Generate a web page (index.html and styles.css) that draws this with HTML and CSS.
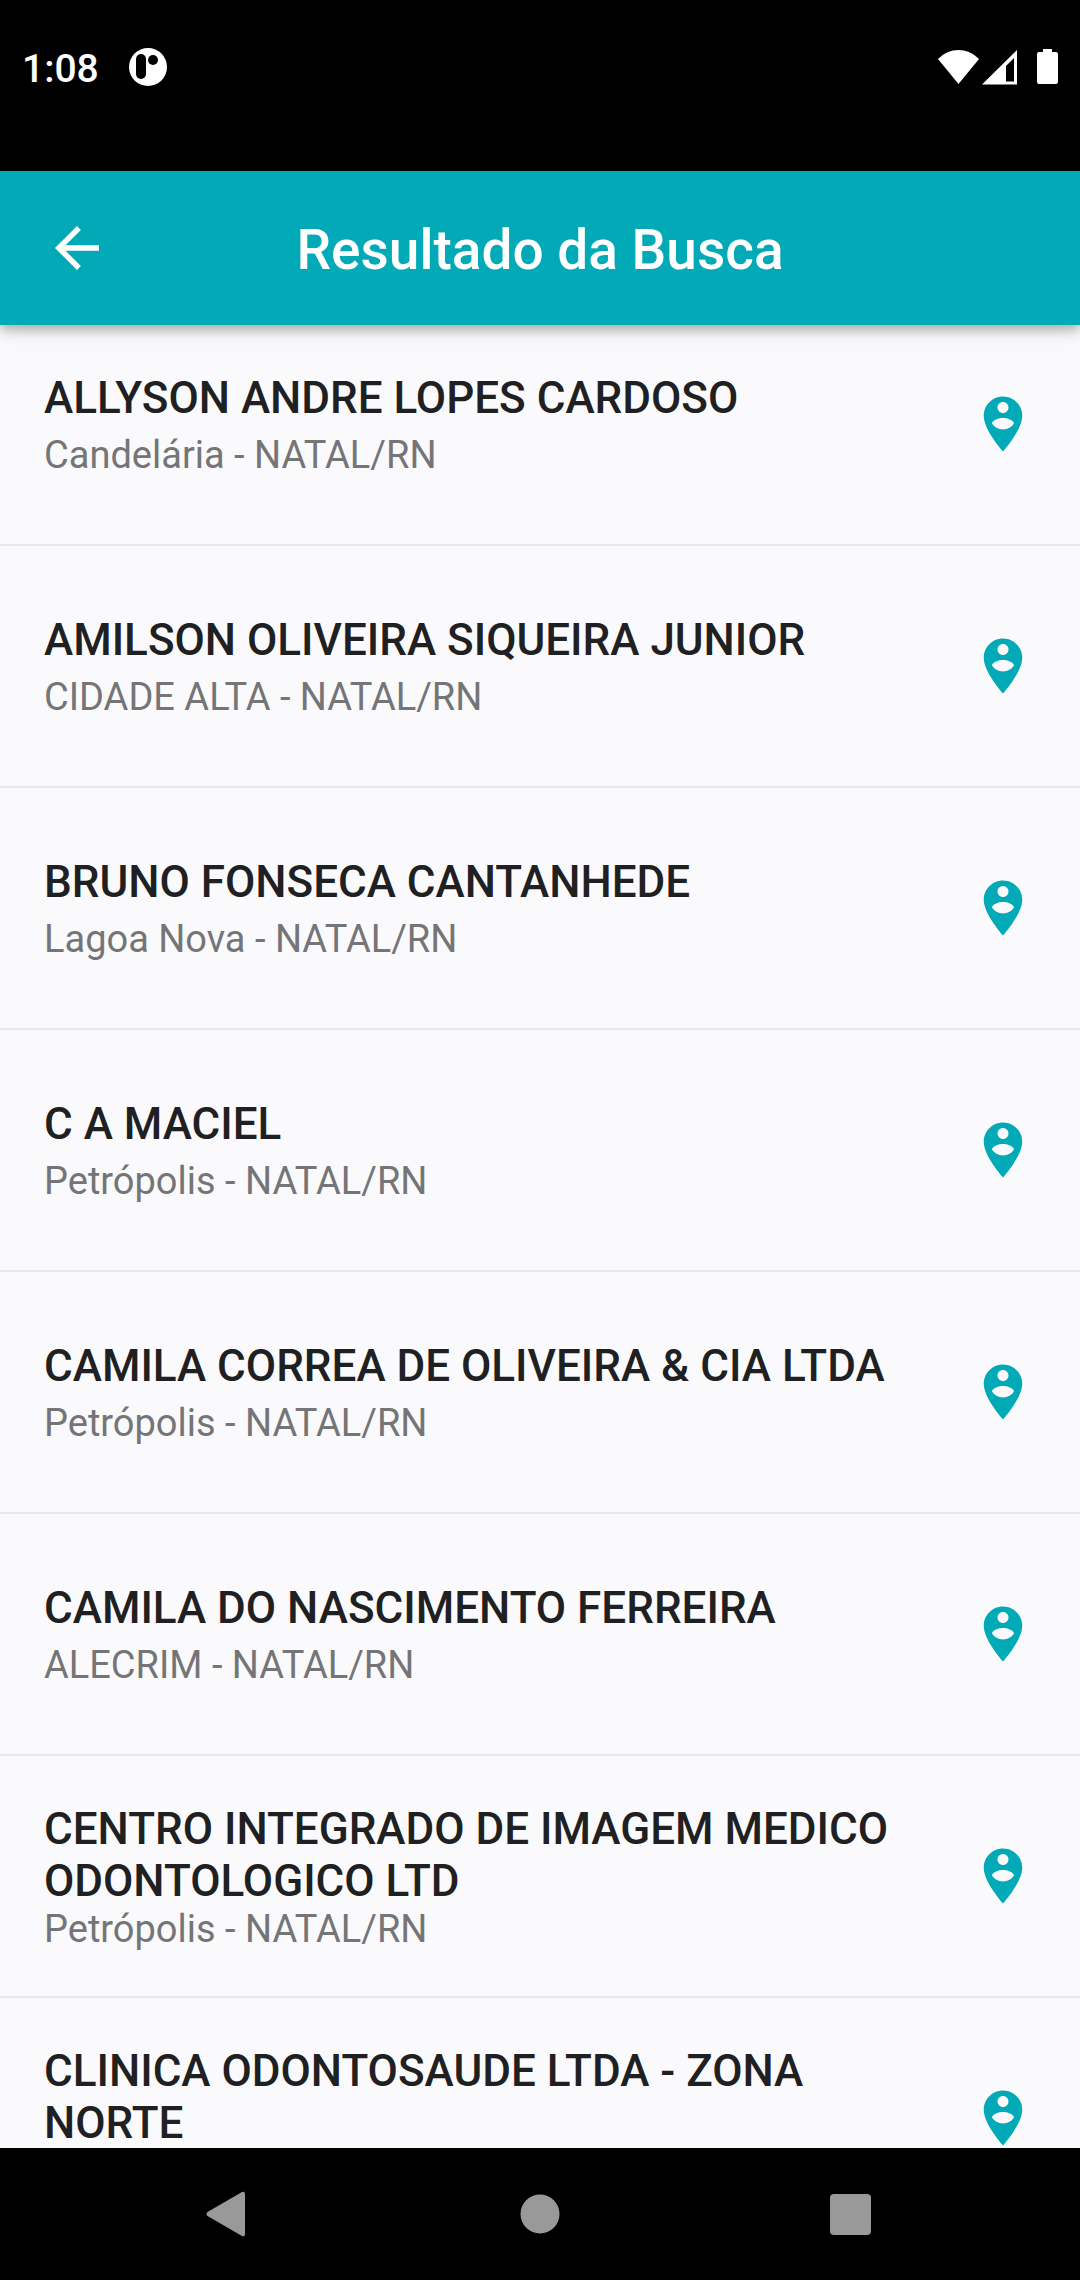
FILE: index.html
```
<!DOCTYPE html>
<html lang="pt-BR">

<head>
    <meta charset="UTF-8">
    <meta name="viewport" content="width=device-width, initial-scale=1.0">

    <title>Resultado da Busca</title>
    <link rel="stylesheet" href="styles.css">
</head>

<body>
    <!-- Pin icon shared by all the results -->
    <svg class="sprite" aria-hidden="true">
        <symbol id="pin" viewBox="0 0 24 24">
            <path d="M12 2C8.14 2 5 5.14 5 9c0 5.25 7 13 7 13s7-7.75 7-13c0-3.86-3.14-7-7-7zm0 2c1.1 0 2 .9 2 2 0 1.11-.9 2-2 2s-2-.89-2-2c0-1.1.9-2 2-2zm0 10c-1.67 0-3.14-.85-4-2.15.02-1.32 2.67-2.05 4-2.05s3.98.73 4 2.05c-.86 1.3-2.33 2.15-4 2.15z"/>
        </symbol>
    </svg>

    <div class="status-bar">
        <span class="clock">1:08</span>
        <svg class="notification" width="38" height="38" viewBox="0 0 38 38">
            <circle cx="19" cy="19" r="19" fill="#fff"/>
            <rect x="7" y="6" width="10" height="25" rx="5"/>
            <circle cx="24" cy="12" r="5"/>
        </svg>
        <svg class="system-icons" width="120" height="36" viewBox="0 0 120 36" fill="#fff">
            <path d="M0 10C12-2 29-2 41 10L20.500 35z"/>
            <path fill-rule="evenodd" d="M44 35.500L79 1v34.500zM68 17v15.500h8V9z"/>
            <path d="M105 0h9v3h4a2 2 0 0 1 2 2v28a2 2 0 0 1-2 2h-17a2 2 0 0 1-2-2V5a2 2 0 0 1 2-2h4z"/>
        </svg>
    </div>

    <header class="app-bar">
        <button type="button" class="back" aria-label="Voltar">
            <svg class="icon" viewBox="0 0 24 24"><path d="M20 11H7.830l5.590-5.590L12 4l-8 8 8 8 1.410-1.410L7.830 13H20v-2z"/></svg>
        </button>
        <h1>Resultado da Busca</h1>
    </header>

    <main class="content">
        <ul class="results">
            <li class="result">
                <div class="info">
                    <h2>ALLYSON ANDRE LOPES CARDOSO</h2>
                    <p>Candelária - NATAL/RN</p>
                </div>
                <button type="button" class="locate" aria-label="Ver no mapa"><svg class="icon"><use href="#pin"/></svg></button>
            </li>
            <li class="result">
                <div class="info">
                    <h2>AMILSON OLIVEIRA SIQUEIRA JUNIOR</h2>
                    <p>CIDADE ALTA - NATAL/RN</p>
                </div>
                <button type="button" class="locate" aria-label="Ver no mapa"><svg class="icon"><use href="#pin"/></svg></button>
            </li>
            <li class="result">
                <div class="info">
                    <h2>BRUNO FONSECA CANTANHEDE</h2>
                    <p>Lagoa Nova - NATAL/RN</p>
                </div>
                <button type="button" class="locate" aria-label="Ver no mapa"><svg class="icon"><use href="#pin"/></svg></button>
            </li>
            <li class="result">
                <div class="info">
                    <h2>C A MACIEL</h2>
                    <p>Petrópolis - NATAL/RN</p>
                </div>
                <button type="button" class="locate" aria-label="Ver no mapa"><svg class="icon"><use href="#pin"/></svg></button>
            </li>
            <li class="result">
                <div class="info">
                    <h2>CAMILA CORREA DE OLIVEIRA &amp; CIA LTDA</h2>
                    <p>Petrópolis - NATAL/RN</p>
                </div>
                <button type="button" class="locate" aria-label="Ver no mapa"><svg class="icon"><use href="#pin"/></svg></button>
            </li>
            <li class="result">
                <div class="info">
                    <h2>CAMILA DO NASCIMENTO FERREIRA</h2>
                    <p>ALECRIM - NATAL/RN</p>
                </div>
                <button type="button" class="locate" aria-label="Ver no mapa"><svg class="icon"><use href="#pin"/></svg></button>
            </li>
            <li class="result">
                <div class="info">
                    <h2>CENTRO INTEGRADO DE IMAGEM MEDICO ODONTOLOGICO LTD</h2>
                    <p>Petrópolis - NATAL/RN</p>
                </div>
                <button type="button" class="locate" aria-label="Ver no mapa"><svg class="icon"><use href="#pin"/></svg></button>
            </li>
            <li class="result">
                <div class="info">
                    <h2>CLINICA ODONTOSAUDE LTDA - ZONA NORTE</h2>
                    <p>&nbsp;</p>
                </div>
                <button type="button" class="locate" aria-label="Ver no mapa"><svg class="icon"><use href="#pin"/></svg></button>
            </li>
        </ul>
    </main>

    <nav class="nav-bar">
        <button type="button" aria-label="Voltar">
            <svg width="48" height="48" viewBox="0 0 48 48"><path d="M1.500 22L36 2q3-1 3 2v40q0 3-3 2L1.500 26q-2-2 0-4z"/></svg>
        </button>
        <button type="button" aria-label="Início">
            <svg width="48" height="48" viewBox="0 0 48 48"><circle cx="24" cy="24" r="19.500"/></svg>
        </button>
        <button type="button" aria-label="Recentes">
            <svg width="48" height="48" viewBox="0 0 48 48"><rect x="4" y="4" width="41" height="41" rx="4"/></svg>
        </button>
    </nav>
</body>

</html>
```
FILE: styles.css
```
* {
    box-sizing: border-box;
}

body {
    margin: 0;
    height: 100vh;
    display: flex;
    flex-direction: column;
    overflow: hidden;
    background-color: #fafafc;
    font-family: Roboto, sans-serif;
}

h1,
h2,
p,
ul {
    margin: 0;
    padding: 0;
}

button {
    display: flex;
    align-items: center;
    justify-content: center;
    padding: 0;
    border: none;
    background: none;
}

.sprite {
    position: absolute;
    width: 0;
    height: 0;
}

.icon {
    width: 66px;
    height: 66px;
    fill: currentColor;
}

/* system status bar */
.status-bar {
    flex: none;
    display: flex;
    align-items: center;
    height: 171px;
    padding: 0 22px 37px;
    background-color: #000;
    color: #fff;
}

.clock {
    padding-top: 4px;
    font-size: 39px;
    line-height: 46px;
    font-weight: 500;
}

.notification {
    margin-left: 30px;
}

.system-icons {
    margin-left: auto;
}

/* app bar */
.app-bar {
    flex: none;
    position: relative;
    z-index: 1;
    display: grid;
    grid-template-columns: 154px 1fr 154px;
    align-items: center;
    height: 154px;
    background-color: #01aab6;
    color: #fff;
    box-shadow: 0 5px 11px 0 rgba(0, 0, 0, 0.28), 0 3px 28px 0 rgba(0, 0, 0, 0.08);
}

.app-bar h1 {
    padding-top: 4px;
    font-size: 55px;
    line-height: 64px;
    font-weight: 500;
    text-align: center;
}

.back {
    height: 154px;
    color: #fff;
}

/* results, the list is a little scrolled under the app bar */
.content {
    flex: 1;
    min-height: 0;
    overflow: hidden;
}

.results {
    margin-top: -21px;
    list-style: none;
}

.result {
    display: flex;
    align-items: center;
    gap: 44px;
    min-height: 242px;
    padding: 0 44px;
    border-bottom: 2px solid #e8e8ea;
}

.info {
    flex: 1;
    display: flex;
    flex-direction: column;
    justify-content: space-between;
    min-height: 108px;
    padding-top: 2px;
}

.info h2 {
    color: #1f2022;
    font-size: 44px;
    line-height: 52px;
    font-weight: 500;
}

.info p {
    color: #757577;
    font-size: 38px;
    line-height: 45px;
}

.locate {
    color: #01aab6;
}

/* system navigation */
.nav-bar {
    flex: none;
    display: flex;
    justify-content: center;
    height: 132px;
    background-color: #000;
}

.nav-bar button {
    width: 310px;
    fill: #999;
}
```
